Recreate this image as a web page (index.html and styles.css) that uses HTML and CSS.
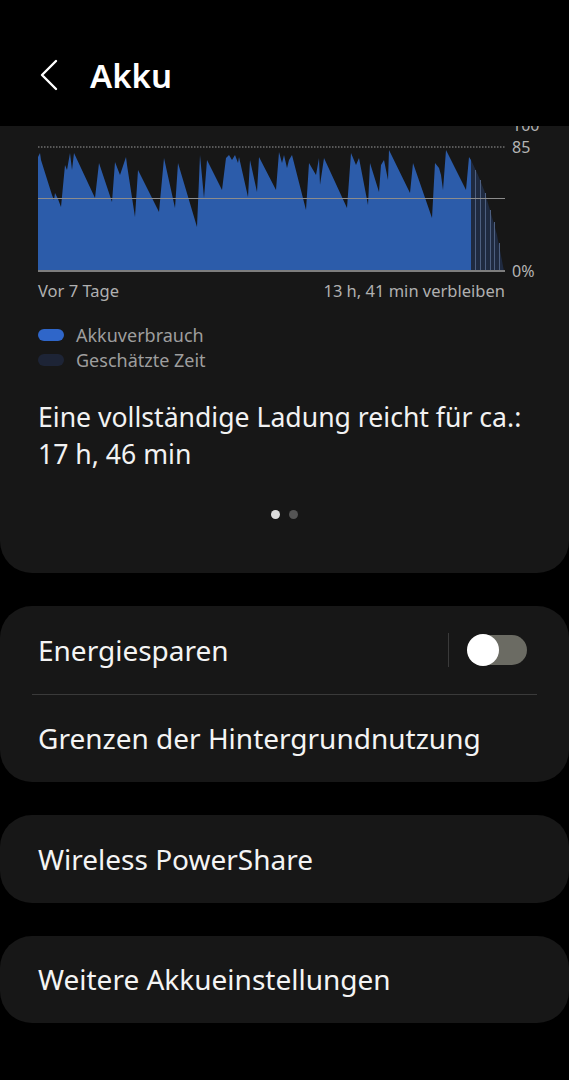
FILE: index.html
```html
<!DOCTYPE html>
<html lang="de">
<head>
  <meta charset="UTF-8">
  <title>Akku</title>
  <link rel="stylesheet" href="styles.css">
</head>
<body>

  <header class="app-bar">
    <svg class="back" width="24" height="34" viewBox="0 0 24 34">
      <polyline points="17,3 3,17 17,31" fill="none" stroke="#fff" stroke-width="2.4" stroke-linecap="round" stroke-linejoin="round"/>
    </svg>
    <h1>Akku</h1>
  </header>

  <section class="card usage-card">
    <svg class="chart" width="507" height="155" viewBox="38 126 507 155">
      <text x="512" y="131" class="axis">100</text>
      <line x1="38" y1="147" x2="505" y2="147" stroke="#9a9a9a" stroke-width="1" stroke-dasharray="1.5 1.5"/>
      <polygon fill="#2c5caa" points="38,271 38,157 40,153 41,160 52,195 54,200 55,193 58,199 61,207 65,165 67,170 70,153 72,170 74,153 95,198 99,163 112,202 115,162 120,175 126,157 127,165 135,217 138,170 159,212 164,158 175,208 178,163 197,227 200,155 204,198 207,160 222,190 226,158 229,155 232,160 235,155 238,163 239,157 248,197 250,160 257,192 259,157 276,190 279,152 282,163 284,155 287,168 289,160 292,155 306,210 309,163 316,175 319,158 320,185 324,158 347,208 351,153 356,165 359,158 368,205 370,163 379,192 381,165 384,160 388,180 389,150 410,193 413,163 432,218 435,163 439,168 441,175 443,190 446,150 466,190 469,157 471,160 471,271"/>
      <polygon fill="#1f2a40" points="471,271 471,160 478,175 484,190 490,210 497,235 504,271"/>
      <g stroke="#4d5f80" stroke-width="1">
        <line x1="475.5" y1="170" x2="475.5" y2="271"/>
        <line x1="480.5" y1="180" x2="480.5" y2="271"/>
        <line x1="485.5" y1="193" x2="485.5" y2="271"/>
        <line x1="490.5" y1="210" x2="490.5" y2="271"/>
        <line x1="494.5" y1="222" x2="494.5" y2="271"/>
        <line x1="499.5" y1="243" x2="499.5" y2="271"/>
      </g>
      <line x1="38" y1="198.5" x2="505" y2="198.5" stroke="#8c8c8c" stroke-width="1.2"/>
      <line x1="38" y1="271" x2="505" y2="271" stroke="#7d7d7d" stroke-width="2"/>
      <text x="512" y="153" class="axis">85</text>
      <text x="512" y="277" class="axis">0%</text>
    </svg>

    <div class="chart-labels">
      <span>Vor 7 Tage</span>
      <span>13 h, 41 min verbleiben</span>
    </div>

    <ul class="legend">
      <li><span class="pill pill-used"></span>Akkuverbrauch</li>
      <li><span class="pill pill-est"></span>Geschätzte Zeit</li>
    </ul>

    <p class="summary">Eine vollständige Ladung reicht für ca.:<br>17 h, 46 min</p>

    <div class="pager">
      <span class="dot active"></span>
      <span class="dot"></span>
    </div>
  </section>

  <section class="card">
    <div class="row">
      <span>Energiesparen</span>
      <div class="switch-wrap">
        <span class="vsep"></span>
        <span class="switch"><span class="knob"></span></span>
      </div>
    </div>
    <div class="divider"></div>
    <div class="row">
      <span>Grenzen der Hintergrundnutzung</span>
    </div>
  </section>

  <section class="card">
    <div class="row">
      <span>Wireless PowerShare</span>
    </div>
  </section>

  <section class="card">
    <div class="row">
      <span>Weitere Akkueinstellungen</span>
    </div>
  </section>

</body>
</html>
```

FILE: styles.css
```css
body {
  margin: 0;
  background: #000;
  color: #f2f2f2;
  font-family: "Noto Sans", Roboto, sans-serif;
  width: 569px;
  height: 1080px;
  overflow: hidden;
}

.app-bar {
  height: 126px;
  display: flex;
  align-items: center;
  padding-left: 39px;
  padding-top: 24px;
  box-sizing: border-box;
}

.back {
  margin-right: 27px;
}

.app-bar h1 {
  margin: 0;
  font-size: 33px;
  font-weight: 600;
  color: #fff;
}

.card {
  background: #171717;
  border-radius: 32px;
  margin-bottom: 33px;
}

.usage-card {
  border-radius: 0 0 32px 32px;
  padding: 0 24px 0 38px;
  height: 447px;
  box-sizing: border-box;
}

.chart {
  display: block;
  margin-bottom: -5px;
}

.axis {
  fill: #b4b4b4;
  font-family: "Noto Sans", Roboto, sans-serif;
  font-size: 16px;
}

.chart-labels {
  display: flex;
  justify-content: space-between;
  margin-right: 40px;
  margin-top: 3px;
  font-size: 16.5px;
  color: #b0b0b0;
}

.legend {
  list-style: none;
  margin: 20px 0 0;
  padding: 0;
  font-size: 18px;
  color: #9e9e9e;
}

.legend li {
  display: flex;
  align-items: center;
  height: 25px;
}

.pill {
  width: 26px;
  height: 12px;
  border-radius: 6px;
  margin-right: 12px;
}

.pill-used {
  background: #2f66c9;
}

.pill-est {
  background: #1d2436;
}

.summary {
  margin: 27px 0 0;
  font-size: 26.6px;
  line-height: 37px;
  color: #f2f2f2;
}

.pager {
  display: flex;
  justify-content: center;
  gap: 9px;
  margin-top: 37px;
  margin-left: -14px;
}

.dot {
  width: 9px;
  height: 9px;
  border-radius: 50%;
  background: #545454;
}

.dot.active {
  background: #dcdcdc;
}

.row {
  height: 87.5px;
  display: flex;
  align-items: center;
  justify-content: space-between;
  padding: 0 42px 0 38px;
  font-size: 28px;
  color: #f4f4f4;
}

.divider {
  height: 1px;
  background: #3a3a3a;
  margin: 0 32px;
}

.switch-wrap {
  display: flex;
  align-items: center;
}

.vsep {
  width: 1px;
  height: 34px;
  background: #3a3a3a;
  margin-right: 20px;
}

.switch {
  position: relative;
  width: 58px;
  height: 30px;
  border-radius: 15px;
  background: #6b6b63;
}

.knob {
  position: absolute;
  left: -2px;
  top: -1px;
  width: 32px;
  height: 32px;
  border-radius: 50%;
  background: #fff;
}
```
